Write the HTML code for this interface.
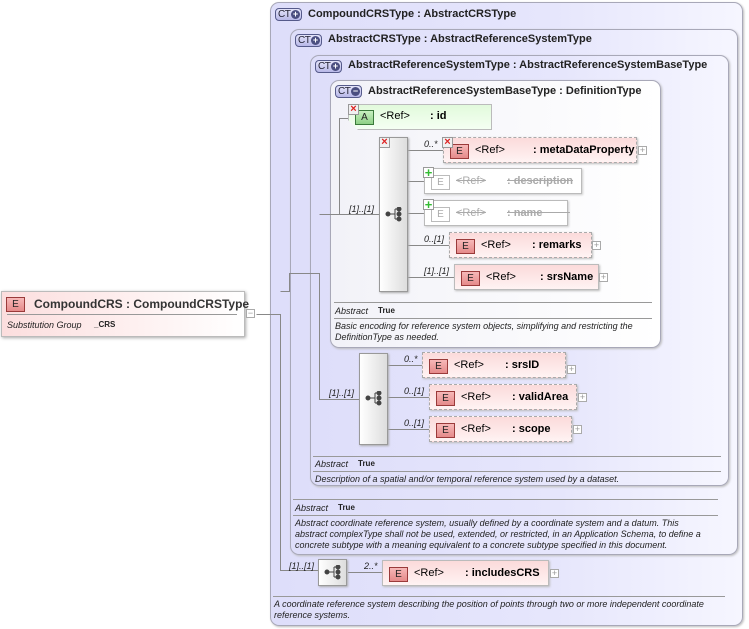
<!DOCTYPE html>
<html><head><meta charset="utf-8"><style>
*{margin:0;padding:0;box-sizing:border-box}
body{width:749px;height:629px;background:#fff;position:relative;overflow:hidden;font-family:"Liberation Sans",sans-serif;color:#000}
.a{position:absolute}
.ct{position:absolute;border:1px solid #a8a8b8;border-radius:9px;background:linear-gradient(90deg,#dedefa 0%,#e6e6fc 60%,#f6f6ff 100%);box-shadow:1px 1px 2px #bbb}
.ctw{background:linear-gradient(90deg,#f2f2f8,#fff)}
.t{position:absolute;font-size:11px;font-weight:bold;white-space:nowrap;color:#222}
.badge{position:absolute;width:27px;height:13px;border:1px solid #555a8a;border-radius:4px;background:linear-gradient(#e4e4fa,#b8b8e8);font-size:10px;line-height:11px;padding-left:2px;color:#223;font-weight:normal;letter-spacing:-0.5px}
.badge i{position:absolute;right:1px;top:1px;width:9px;height:9px;border-radius:50%;background:#4a4e80;color:#fff;font-style:normal;font-size:9px;line-height:9px;text-align:center;font-weight:bold;letter-spacing:0}
.el{position:absolute;height:26px;border:1px solid #bbb;background:linear-gradient(#fbdada,#fff3f3);box-shadow:1px 1px 2px #bbb;font-size:11px;font-weight:bold;white-space:nowrap;line-height:24px}
.dash{border:1px dashed #aaa}
.gray{background:#fff;color:#aaa;box-shadow:1px 1px 2px #ccc}
.gray s{color:#aaa}
.E{position:absolute;left:6px;top:6px;width:19px;height:15px;border:1px solid #9a3a3a;background:linear-gradient(#f7b8b8,#e58a8a);font-size:10px;line-height:13px;text-align:center;font-weight:normal;color:#222}
.gray .E{border-color:#bbb;background:#fff;color:#aaa}
.ref{position:absolute;left:31px;font-weight:normal}
.nm{position:absolute}
.pl{position:absolute;width:9px;height:9px;border:1px solid #aaa;background:#fff;font-size:9px;line-height:7px;text-align:center;color:#999}
.seq{position:absolute;width:29px;border:1px solid #999;background:linear-gradient(90deg,#fff,#ddd);box-shadow:1px 1px 2px #aaa}
.sm{position:absolute;font-size:9px;font-style:italic;white-space:nowrap;color:#222}
.hl{position:absolute;height:1px;background:#999}
.x{position:absolute;width:11px;height:11px;background:#f0f0f0;border:1px solid #999;color:#d22;font-size:11px;line-height:9px;text-align:center;font-weight:bold}
.g{position:absolute;width:11px;height:11px;background:#fff;border:1px solid #999;color:#3b3;font-size:13px;line-height:9px;text-align:center;font-weight:bold}
</style></head><body>

<div class="a" style="left:1px;top:291px;width:244px;height:46px;border:1px solid #bbb;background:linear-gradient(90deg,#fcdede,#fff);box-shadow:1px 1px 3px #aaa">
 <div class="E" style="left:4px;top:5px">E</div>
 <div class="t" style="left:32px;top:5px;font-size:12px;color:#333">CompoundCRS : CompoundCRSType</div>
 <div class="hl" style="left:5px;right:7px;top:22px;background:#999"></div>
 <div class="sm" style="left:5px;top:28px">Substitution Group</div>
 <div class="sm" style="left:92px;top:28px;font-style:normal;font-weight:bold;font-size:8px">_CRS</div>
</div>
<div class="pl" style="left:246px;top:309px">−</div>

<div class="ct" style="left:270px;top:2px;width:473px;height:624px"></div>
<div class="badge" style="left:275px;top:8px">CT<i>+</i></div>
<div class="t" style="left:308px;top:8px">CompoundCRSType : AbstractCRSType</div>

<div class="ct" style="left:290px;top:29px;width:448px;height:526px"></div>
<div class="badge" style="left:295px;top:34px">CT<i>+</i></div>
<div class="t" style="left:328px;top:33px">AbstractCRSType : AbstractReferenceSystemType</div>

<div class="ct" style="left:310px;top:55px;width:419px;height:431px"></div>
<div class="badge" style="left:315px;top:60px">CT<i>+</i></div>
<div class="t" style="left:348px;top:59px">AbstractReferenceSystemType : AbstractReferenceSystemBaseType</div>

<div class="ct ctw" style="left:330px;top:80px;width:331px;height:268px"></div>
<div class="badge" style="left:335px;top:85px">CT<i>−</i></div>
<div class="t" style="left:368px;top:85px">AbstractReferenceSystemBaseType : DefinitionType</div>

<svg class="a" style="left:0;top:0" width="749" height="629">
<g stroke="#888" stroke-width="1" fill="none">
<path d="M256.5 314.5H280.5V570.5H318"/>
<path d="M280.5 291.5H289.5V273.5H319.5V399.5H359"/>
<path d="M319.5 214.5H339.5V118.5H348"/>
<path d="M339.5 214.5H379"/>
<path d="M408 150.5H443M408 181.5H424M408 213.5H424M408 245.5H449M408 277.5H454"/>
<path d="M388 365.5H422M388 397.5H429M388 429.5H429"/>
<path d="M348 572.5H382"/>
</g></svg>

<div class="a" style="left:348px;top:104px;width:144px;height:26px;border:1px solid #bbb;background:linear-gradient(#e2fadc,#f4fff2);box-shadow:1px 1px 2px #bbb;clip-path:polygon(0 0,100% 0,100% 100%,10px 100%,0 16px)"></div>
<div class="a" style="left:355px;top:110px;width:19px;height:15px;border:1px solid #3a7a3a;background:linear-gradient(#c8f0c0,#8ed086);font-size:10px;line-height:13px;text-align:center;color:#222">A</div>
<div class="x" style="left:348px;top:104px">×</div>
<div class="a" style="left:380px;top:110px;font-size:11px">&lt;Ref&gt;</div>
<div class="a" style="left:430px;top:110px;font-size:11px;font-weight:bold">: id</div>

<div class="seq" style="left:379px;top:137px;height:155px"></div>
<div class="x" style="left:379px;top:137px">×</div>
<svg class="a" style="left:385px;top:207px" width="20" height="16"><g fill="#444" stroke="#444"><circle cx="3" cy="7" r="2"/><circle cx="14" cy="2" r="2"/><circle cx="14" cy="7" r="2"/><circle cx="14" cy="12" r="2"/><path d="M3 7H10M10 2V12M10 2H14M10 12H14" fill="none"/></g></svg>
<div class="sm" style="left:349px;top:204px">[1]..[1]</div>

<div class="sm" style="left:424px;top:139px">0..*</div>
<div class="el dash" style="left:443px;top:137px;width:194px"><div class="E">E</div><span class="ref">&lt;Ref&gt;</span><span class="nm" style="left:89px">: metaDataProperty</span></div>
<div class="x" style="left:442px;top:137px">×</div>
<div class="pl" style="left:638px;top:146px">+</div>

<div class="el gray" style="left:424px;top:168px;width:158px"><div class="E">E</div><span class="ref"><s>&lt;Ref&gt;</s></span><span class="nm" style="left:82px"><s>: description</s></span></div>
<div class="g" style="left:423px;top:167px">+</div>
<div class="el gray" style="left:424px;top:200px;width:144px"><div class="E">E</div><span class="ref"><s>&lt;Ref&gt;</s></span><span class="nm" style="left:82px"><s>: name&nbsp;&nbsp;&nbsp;&nbsp;&nbsp;&nbsp;&nbsp;&nbsp;&nbsp;</s></span></div>
<div class="g" style="left:423px;top:199px">+</div>

<div class="sm" style="left:424px;top:234px">0..[1]</div>
<div class="el dash" style="left:449px;top:232px;width:143px"><div class="E">E</div><span class="ref">&lt;Ref&gt;</span><span class="nm" style="left:82px">: remarks</span></div>
<div class="pl" style="left:592px;top:241px">+</div>
<div class="sm" style="left:424px;top:266px">[1]..[1]</div>
<div class="el" style="left:454px;top:264px;width:145px"><div class="E">E</div><span class="ref">&lt;Ref&gt;</span><span class="nm" style="left:85px">: srsName</span></div>
<div class="pl" style="left:599px;top:273px">+</div>

<div class="hl" style="left:334px;top:302px;width:318px"></div>
<div class="sm" style="left:335px;top:306px">Abstract</div>
<div class="sm" style="left:378px;top:306px;font-style:normal;font-weight:bold;font-size:8px">True</div>
<div class="hl" style="left:334px;top:318px;width:318px"></div>
<div class="sm" style="left:335px;top:321px;line-height:11px">Basic encoding for reference system objects, simplifying and restricting the<br>DefinitionType as needed.</div>

<div class="seq" style="left:359px;top:353px;height:92px"></div>
<svg class="a" style="left:365px;top:391px" width="20" height="16"><g fill="#444" stroke="#444"><circle cx="3" cy="7" r="2"/><circle cx="14" cy="2" r="2"/><circle cx="14" cy="7" r="2"/><circle cx="14" cy="12" r="2"/><path d="M3 7H10M10 2V12M10 2H14M10 12H14" fill="none"/></g></svg>
<div class="sm" style="left:329px;top:388px">[1]..[1]</div>

<div class="sm" style="left:404px;top:354px">0..*</div>
<div class="el dash" style="left:422px;top:352px;width:144px"><div class="E">E</div><span class="ref">&lt;Ref&gt;</span><span class="nm" style="left:82px">: srsID</span></div>
<div class="pl" style="left:567px;top:365px">+</div>
<div class="sm" style="left:404px;top:386px">0..[1]</div>
<div class="el dash" style="left:429px;top:384px;width:148px"><div class="E">E</div><span class="ref">&lt;Ref&gt;</span><span class="nm" style="left:82px">: validArea</span></div>
<div class="pl" style="left:578px;top:393px">+</div>
<div class="sm" style="left:404px;top:418px">0..[1]</div>
<div class="el dash" style="left:429px;top:416px;width:143px"><div class="E">E</div><span class="ref">&lt;Ref&gt;</span><span class="nm" style="left:82px">: scope</span></div>
<div class="pl" style="left:573px;top:425px">+</div>

<div class="hl" style="left:313px;top:456px;width:408px"></div>
<div class="sm" style="left:315px;top:459px">Abstract</div>
<div class="sm" style="left:358px;top:459px;font-style:normal;font-weight:bold;font-size:8px">True</div>
<div class="hl" style="left:313px;top:471px;width:408px"></div>
<div class="sm" style="left:315px;top:474px">Description of a spatial and/or temporal reference system used by a dataset.</div>

<div class="hl" style="left:293px;top:499px;width:425px"></div>
<div class="sm" style="left:295px;top:503px">Abstract</div>
<div class="sm" style="left:338px;top:503px;font-style:normal;font-weight:bold;font-size:8px">True</div>
<div class="hl" style="left:293px;top:515px;width:425px"></div>
<div class="sm" style="left:295px;top:518px;line-height:11px">Abstract coordinate reference system, usually defined by a coordinate system and a datum. This<br>abstract complexType shall not be used, extended, or restricted, in an Application Schema, to define a<br>concrete subtype with a meaning equivalent to a concrete subtype specified in this document.</div>

<div class="seq" style="left:318px;top:559px;height:27px"></div>
<svg class="a" style="left:324px;top:565px" width="20" height="16"><g fill="#444" stroke="#444"><circle cx="3" cy="7" r="2"/><circle cx="14" cy="2" r="2"/><circle cx="14" cy="7" r="2"/><circle cx="14" cy="12" r="2"/><path d="M3 7H10M10 2V12M10 2H14M10 12H14" fill="none"/></g></svg>
<div class="sm" style="left:289px;top:561px">[1]..[1]</div>
<div class="sm" style="left:364px;top:561px">2..*</div>
<div class="el" style="left:382px;top:560px;width:167px"><div class="E">E</div><span class="ref">&lt;Ref&gt;</span><span class="nm" style="left:82px">: includesCRS</span></div>
<div class="pl" style="left:550px;top:569px">+</div>

<div class="hl" style="left:273px;top:596px;width:452px"></div>
<div class="sm" style="left:274px;top:599px;line-height:11px">A coordinate reference system describing the position of points through two or more independent coordinate<br>reference systems.</div>

</body></html>
